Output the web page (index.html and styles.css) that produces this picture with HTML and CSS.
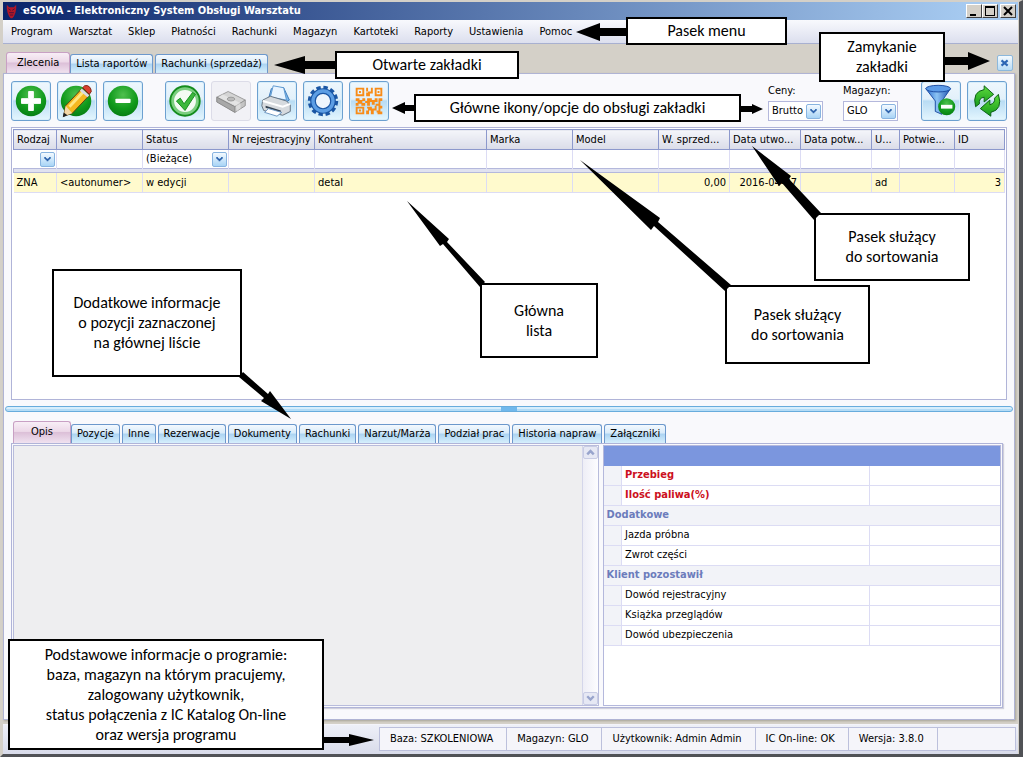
FILE: index.html
```html
<!DOCTYPE html>
<html lang="pl">
<head>
<meta charset="utf-8">
<title>eSOWA - Elektroniczny System Obsługi Warsztatu</title>
<link rel="stylesheet" href="styles.css">
</head>
<body>
<svg class="defs" aria-hidden="true">
  <defs>
    <radialGradient id="green" cx="50%" cy="30%" r="75%">
      <stop offset="0" stop-color="#4fc04f"/><stop offset=".6" stop-color="#109a1c"/><stop offset="1" stop-color="#067a12"/>
    </radialGradient>
    <linearGradient id="blue" x1="0" y1="0" x2="1" y2="0">
      <stop offset="0" stop-color="#2a6cd0"/><stop offset=".45" stop-color="#8cc4f4"/><stop offset="1" stop-color="#1c50b0"/>
    </linearGradient>
    <linearGradient id="leaf" x1="0" y1="0" x2="0" y2="1">
      <stop offset="0" stop-color="#5edb3c"/><stop offset="1" stop-color="#159a1c"/>
    </linearGradient>
    <symbol id="chevron" viewBox="0 0 16 16">
      <path d="M4 5h2v1h1v1h2V6h1V5h2v2h-1v1h-1v1H9v1H7V9H6V8H5V7H4z" fill="#2c62ac"/>
    </symbol>
  </defs>
</svg>
<div class="window">
  <header class="titlebar">
    <svg class="logo" viewBox="0 0 14 17" aria-hidden="true">
      <path d="M1 0l3 3h6l3-3v5l-1 5-2 5-2 2H6l-2-2-2-5-1-5z" fill="#b01828"/>
      <path d="M3 5l3 2M11 5L8 7M4 10h6M5 13h4" stroke="#3a1040" stroke-width="1" fill="none"/>
    </svg>
    <h1>eSOWA - Elektroniczny System Obsługi Warsztatu</h1>
    <div class="winbuttons">
      <button aria-label="Minimalizuj"><svg viewBox="0 0 14 12"><path d="M3 9h6v2H3z"/></svg></button>
      <button aria-label="Maksymalizuj"><svg viewBox="0 0 14 12"><path d="M2 1h10v10H2zM3 3v7h8V3z" fill-rule="evenodd"/></svg></button>
      <button aria-label="Zamknij"><svg viewBox="0 0 14 12"><path d="M3 2l8 8M11 2l-8 8" stroke="#000" stroke-width="2"/></svg></button>
    </div>
  </header>
  <nav class="menu">
    <button>Program</button><button>Warsztat</button><button>Sklep</button><button>Płatności</button><button>Rachunki</button><button>Magazyn</button><button>Kartoteki</button><button>Raporty</button><button>Ustawienia</button><button>Pomoc</button>
  </nav>
  <div class="tabstrip">
    <div class="tabs">
      <button class="tab active">Zlecenia</button><button class="tab">Lista raportów</button><button class="tab">Rachunki (sprzedaż)</button>
    </div>
    <button class="closetab" aria-label="Zamknij zakładkę"><svg viewBox="0 0 16 16"><path d="M4 5l7 6M11 5l-7 6" stroke="#2c66b4" stroke-width="2.4"/></svg></button>
  </div>
  <main class="page">
    <div class="toolbar">
      <button class="tool" aria-label="Dodaj"><svg viewBox="0 0 40 40"><circle cx="20" cy="20" r="16" fill="url(#green)"/><path d="M17.500 10h5v7.500H30v5h-7.500V30h-5v-7.500H10v-5h7.500z" fill="#fff" stroke="#fff" stroke-linejoin="round"/></svg></button>
      <button class="tool" aria-label="Edytuj"><svg viewBox="0 0 40 40"><circle cx="19" cy="20" r="16" fill="url(#green)"/><path d="M6 36l2-11L25 7l8 7-18 19z" fill="#f4b820" stroke="#5c3c10"/><path d="M12 26L27 10" stroke="#ffe680" stroke-width="3"/><path d="M6 36l2-11 7 8z" fill="#f4d8a8"/><path d="M5 37l1-5 4 3z" fill="#222"/><path d="M26 6l2-2q3-1 5 1t2 5l-2 3z" fill="#d84030" stroke="#802010"/><path d="M24 8l8 7" stroke="#d8dce0" stroke-width="3"/></svg></button>
      <button class="tool" aria-label="Usuń"><svg viewBox="0 0 40 40"><circle cx="20" cy="20" r="16" fill="url(#green)"/><rect x="12" y="17.500" width="16" height="4.500" rx="1" fill="#fff"/></svg></button>
      <button class="tool apart" aria-label="Zatwierdź"><svg viewBox="0 0 40 40"><circle cx="20" cy="20" r="15" fill="#fff" stroke="#148c1c" stroke-width="3"/><circle cx="20" cy="20" r="13" fill="#f4fbf4" stroke="#7ccf80" stroke-width="3"/><path d="M11 20l4-3 4 6 9-12 3 2-11 17z" fill="#3cb83c" stroke="#148c1c"/></svg></button>
      <button class="tool off" aria-label="Płatność" disabled><svg viewBox="0 0 40 40"><path d="M5 16l12-6 18 9-11 7z" fill="#d4d4d4" stroke="#9a9a9a"/><path d="M5 16l19 10v6L5 21z" fill="#a8a8a8" stroke="#888"/><path d="M24 26l11-7v6l-11 7z" fill="#c4c4c4" stroke="#929292"/><path d="M11 13l19 9v6l-4 3-1-6-18-9z" fill="#f4f4f4" opacity=".5"/><ellipse cx="20" cy="18" rx="4" ry="2" fill="#bbb" stroke="#999"/></svg></button>
      <button class="tool" aria-label="Drukuj"><svg viewBox="0 0 40 40"><path d="M11 18l3-11 13-1 6 13-9 5z" fill="#7db8ec" stroke="#3c78b8"/><path d="M13 16l3-12 11 2 3 13z" fill="#e8f4ff" stroke="#5c98d0"/><path d="M5 19l8-4 17 5 4 4v7l-8 4-20-5-2-5z" fill="#d6dade" stroke="#62717f"/><path d="M5 20l21 6 8-3" fill="none" stroke="#fff" stroke-width="2"/><path d="M8 25l16 5v2L8 27z" fill="#33414f"/><path d="M11 28l14 4-5 4-13-4z" fill="#fff" stroke="#6894c0"/></svg></button>
      <button class="tool" aria-label="Ustawienia"><svg viewBox="0 0 40 40"><circle cx="20" cy="20" r="14" fill="none" stroke="#1a56a4" stroke-width="4" stroke-dasharray="4.500 2.830"/><circle cx="20" cy="20" r="10.500" fill="#eef6fd" stroke="#1a56a4" stroke-width="6"/><circle cx="20" cy="20" r="10.500" fill="none" stroke="#5c9ee4" stroke-width="3.500"/></svg></button>
      <button class="tool" aria-label="Kod QR"><svg viewBox="0 0 40 40"><path fill="#f88c18" fill-rule="evenodd" d="M6 6h9v9H6zM8 8v5h5V8zM9.500 9.500h2v2h-2zM26 6h8v9h-8zM28 8v5h4V8zM29 9.500h2v2h-2zM6 26h9v8H6zM8 28v4h5v-4zM9.500 29h2v2h-2zM17 6h2v4h3V6h2v6h-3v3h-4v-4h2v-1h-2zM6 17h4v2h3v-2h3v3h-3v2h3v3h-4v-2h-3v2H6v-3h2v-2H6zM18 17h5v2h3v-2h3v4h-3v3h-3v-3h-2v4h-3v-3h-2v-2h2zM30 17h4v3h-2v5h2v3h-4v-3h-3v-2h3zM18 26h5v2h3v-3h2v5h-3v4h-3v-4h-2v4h-3v-4h2v-2h-1zM28 30h2v-2h2v3h2v3h-5v-2h-1z"/></svg></button>
      <div class="filters">
        <label class="field">Ceny:
          <span class="combo"><select><option>Brutto</option></select><svg><use href="#chevron"/></svg></span>
        </label>
        <label class="field">Magazyn:
          <span class="combo"><select><option>GLO</option></select><svg><use href="#chevron"/></svg></span>
        </label>
      </div>
      <button class="tool" aria-label="Usuń filtr"><svg viewBox="0 0 40 40"><path d="M4 7q14 6 26 0L21 20v14l-7-3V20z" fill="url(#blue)" stroke="#1c4ca0"/><ellipse cx="17" cy="7" rx="13" ry="3.500" fill="#5c9ce8" stroke="#1c4ca0"/><circle cx="26" cy="26" r="9" fill="url(#green)"/><rect x="20" y="24" width="12" height="4" fill="#fff"/></svg></button>
      <button class="tool" aria-label="Odśwież"><svg viewBox="0 0 40 40" fill="url(#leaf)" stroke="#0a5c14"><path d="M8 26Q4 10 17 8V4l10 9-10 8v-5q-6 1-5 7z"/><path d="M32 13q5 16-8 19v4l-11-8 10-9v5q6-2 5-7z"/></svg></button>
    </div>

    <section class="list">
      <table class="grid">
        <colgroup><col class="c43"><col class="c86"><col class="c86"><col class="c86"><col class="c172"><col class="c86"><col class="c86"><col class="c71"><col class="c71"><col class="c71"><col class="c28"><col class="c55"><col></colgroup>
        <thead>
          <tr><th>Rodzaj</th><th>Numer</th><th>Status</th><th>Nr rejestracyjny</th><th>Kontrahent</th><th>Marka</th><th>Model</th><th>W. sprzed...</th><th>Data utwo...</th><th>Data potw...</th><th>U...</th><th>Potwie...</th><th>ID</th></tr>
        </thead>
        <tbody>
          <tr class="filter">
            <td><span class="combo"><select aria-label="Filtr: Rodzaj"><option></option></select><svg><use href="#chevron"/></svg></span></td><td></td>
            <td><span class="combo"><select aria-label="Filtr: Status"><option>(Bieżące)</option></select><svg><use href="#chevron"/></svg></span></td><td></td><td></td><td></td><td></td><td></td><td></td><td></td><td></td><td></td><td></td>
          </tr>
          <tr class="rule"><td colspan="13"></td></tr>
          <tr class="row"><td>ZNA</td><td>&lt;autonumer&gt;</td><td>w edycji</td><td></td><td>detal</td><td></td><td></td><td class="num">0,00</td><td class="num">2016-04-27</td><td></td><td>ad</td><td></td><td class="num">3</td></tr>
        </tbody>
      </table>
    </section>

    <div class="splitter"><span></span></div>

    <div class="tabs lower">
      <button class="tab active">Opis</button><button class="tab">Pozycje</button><button class="tab">Inne</button><button class="tab">Rezerwacje</button><button class="tab">Dokumenty</button><button class="tab">Rachunki</button><button class="tab">Narzut/Marża</button><button class="tab">Podział prac</button><button class="tab">Historia napraw</button><button class="tab">Załączniki</button>
    </div>
    <section class="details">
      <div class="memo">
        <textarea aria-label="Opis" readonly></textarea>
        <div class="scroll">
          <button aria-label="W górę"><svg viewBox="0 0 16 13"><path d="M4 9l4-4 4 4" fill="none" stroke="#98a4cc" stroke-width="3"/></svg></button>
          <button aria-label="W dół"><svg viewBox="0 0 16 13"><path d="M4 4l4 4 4-4" fill="none" stroke="#98a4cc" stroke-width="3"/></svg></button>
        </div>
      </div>
      <div class="props">
        <table>
          <colgroup><col class="gut"><col class="name"><col></colgroup>
          <tbody>
            <tr class="sel"><td colspan="3"></td></tr>
            <tr class="must"><td></td><th>Przebieg</th><td></td></tr>
            <tr class="must"><td></td><th>Ilość paliwa(%)</th><td></td></tr>
            <tr class="group"><th colspan="3">Dodatkowe</th></tr>
            <tr><td></td><th>Jazda próbna</th><td></td></tr>
            <tr><td></td><th>Zwrot części</th><td></td></tr>
            <tr class="group"><th colspan="3">Klient pozostawił</th></tr>
            <tr><td></td><th>Dowód rejestracyjny</th><td></td></tr>
            <tr><td></td><th>Książka przeglądów</th><td></td></tr>
            <tr><td></td><th>Dowód ubezpieczenia</th><td></td></tr>
          </tbody>
        </table>
      </div>
    </section>
  </main>
  <footer class="status">
    <span>Baza: SZKOLENIOWA</span><span>Magazyn: GLO</span><span>Użytkownik: Admin Admin</span><span>IC On-line: OK</span><span>Wersja: 3.8.0</span><span class="rest"></span>
  </footer>
</div>

<p class="note menu-note">Pasek menu</p>
<p class="note tabs-note">Otwarte zakładki</p>
<p class="note close-note">Zamykanie<br>zakładki</p>
<p class="note tools-note">Główne ikony/opcje do obsługi zakładki</p>
<p class="note sort-note-a">Pasek służący<br>do sortowania</p>
<p class="note sort-note-b">Pasek służący<br>do sortowania</p>
<p class="note list-note">Główna<br>lista</p>
<p class="note details-note">Dodatkowe informacje<br>o pozycji zaznaczonej<br>na głównej liście</p>
<p class="note status-note">Podstawowe informacje o programie:<br>baza, magazyn na którym pracujemy,<br>zalogowany użytkownik,<br>status połączenia z IC Katalog On-line<br>oraz wersja programu</p>
<svg class="arrows" width="1023" height="757" aria-hidden="true">
  <path d="M576 32l24-9v5h27v8h-27v5z"/>
  <path d="M274 65l31-9v5h31v8h-31v5z"/>
  <path d="M990 61l-22-9v5h-24v8h24v5z"/>
  <path d="M392 108l13-6v3h10v6h-10v3z"/>
  <path d="M763 109l-11-5v2h-12v6h12v2z"/>
  <path d="M752 146L791 176L789 179L821 213L814 220L782 183L779 186z"/>
  <path d="M580 160L660 218L658 222L731 285L725 291L654 226L651 230z"/>
  <path d="M407 201L449 239L447 242L485 282L480 287L443 244L440 246z"/>
  <path d="M291 419L261 401L264 398L239 377L243 372L268 394L270 391z"/>
  <path d="M374 740l-25-6v3h-26v6h26v3z"/>
</svg>
</body>
</html>
```
FILE: styles.css
```css
* { box-sizing: border-box; }
body {
  margin: 0;
  font: 11px/14px Tahoma, "DejaVu Sans Condensed", "DejaVu Sans", sans-serif;
  color: #000;
  position: relative;
}
button, select, textarea { font: inherit; color: inherit; margin: 0; padding: 0; border: 0; background: none; }
svg { display: block; }
.defs { position: absolute; width: 0; height: 0; }

.window {
  display: flex;
  flex-direction: column;
  min-height: 100vh;
  background: #d4d0c8;
  border: solid #d4d0c8;
  border-width: 2px 4px 3px 3px;
  border-right-color: #505256;
  border-bottom-color: #505256;
}

.titlebar {
  display: flex;
  align-items: center;
  gap: 6px;
  height: 18px;
  margin-right: 1px;
  padding: 0 2px 0 3px;
  background: linear-gradient(90deg, #0a246a, #a6caf0 95%);
}
.logo { width: 11px; height: 17px; }
.titlebar h1 { margin: 0; font-size: 11px; font-weight: bold; color: #fff; flex: 1; }
.winbuttons { display: flex; }
.winbuttons button {
  width: 16px;
  height: 14px;
  background: #d4d0c8;
  border: 1px solid;
  border-color: #fff #404040 #404040 #fff;
}
.winbuttons button:last-child { margin-left: 2px; }

.menu {
  display: flex;
  gap: 16px;
  height: 24px;
  padding: 0 8px;
  background: linear-gradient(#f8f9fd, #dcdfee);
  border-bottom: 1px solid #a8b0d0;
  margin-right: 1px;
}

.tabstrip { display: flex; justify-content: space-between; height: 29px; padding: 0 6px 0 3px; }
.tabs { display: flex; align-items: flex-end; gap: 2px; }
.tab {
  height: 19px;
  padding: 0 5px;
  border: 1px solid #6c98cc;
  border-bottom: 0;
  border-radius: 3px 3px 0 0;
  background: linear-gradient(#f4f9fe, #d8ebfa 45%, #abd3f2 50%, #d6effc);
}
.tab.active {
  height: 21px;
  padding: 0 10px;
  margin-right: -2px;
  border-color: #c8a0c4;
  background: linear-gradient(#f8eef6, #ecd8e8 45%, #dcc0d8 50%, #f0e2f0);
}
.closetab {
  align-self: center;
  width: 16px;
  height: 16px;
  border: 1px solid #8cb8dc;
  border-radius: 2px;
  background: linear-gradient(#f4faff, #b8dcf6);
  margin-top: 8px;
}

.page {
  flex: 1;
  display: flex;
  flex-direction: column;
  margin-right: 4px;
  padding: 7px 1px 11px;
  border: 1px solid #b0b4d4;
  background: #f9f9fc;
  box-shadow: 1px 1px 2px #a8a498;
}
.toolbar { display: flex; gap: 6px; margin: 0 6px; }
.tool {
  width: 40px;
  height: 40px;
  border: 1px solid #6ca0d0;
  border-radius: 3px;
  background: linear-gradient(#eef7fd, #e2f0fa 45%, #b8dcf4 50%, #e4f6fe);
  box-shadow: inset 0 0 0 1px #d8eefa;
}
.tool svg { width: 38px; height: 38px; }
.tool.apart { margin-left: 16px; }
.tool.off { border-color: #dcdce8; background: #f1f1f6; box-shadow: none; }
.filters { display: flex; gap: 20px; margin: 3px 17px 0 auto; }
.field { width: 55px; white-space: nowrap; }
.field .combo { height: 20px; margin-top: 3px; border: 1px solid #b4b8dc; background: #fff; }
.combo { display: flex; align-items: center; position: relative; }
.combo select { appearance: none; width: 100%; padding: 0 18px 0 3px; background: none; }
.combo svg {
  position: absolute;
  right: 1px;
  width: 15px;
  height: 15px;
  border: 1px solid #88b4e0;
  border-radius: 2px;
  background: linear-gradient(#f4faff, #a8d4f6);
  pointer-events: none;
}

.list {
  flex: 273 1 0;
  margin: 6px 6px 0;
  padding: 1px;
  border: 1px solid #b0b4d8;
  background: #fff;
}
.grid { width: 100%; border-collapse: collapse; table-layout: fixed; }
.grid th, .grid td { padding: 0 3px; white-space: nowrap; }
.grid th {
  height: 20px;
  text-align: left;
  font-weight: normal;
  border: 1px solid #8c98cc;
  background: linear-gradient(#f4f5fa, #dadce8);
}
.grid td { border: 0 solid #dcdcf4; border-right-width: 1px; }
.filter td { height: 19px; padding: 0; }
.grid .rule td { height: 4px; padding: 0; background: #e0e2f0; border: 1px solid #b4b8dc; }
.row td { height: 20px; background: #fffacd; border-bottom-width: 1px; }
.grid .num { text-align: right; }
.c28 { width: 28px; } .c43 { width: 43px; } .c55 { width: 55px; } .c71 { width: 71px; } .c86 { width: 86px; } .c172 { width: 172px; }

.splitter {
  height: 6px;
  margin: 6px 0 9px;
  border: 1px solid #68acdc;
  border-radius: 3px;
  background: linear-gradient(#d8eefc 50%, #b4dcf6 50%);
}
.splitter span { display: block; width: 16px; height: 4px; margin: 0 auto; background: #70b8ec; }

.lower { margin-left: 8px; }
.lower .tab.active { height: 22px; padding: 0 17px; }

.details {
  flex: 265 1 0;
  display: grid;
  grid-template-columns: 585fr 398fr;
  gap: 4px;
  margin: 0 10px 0 6px;
  padding: 1px;
  border: 1px solid #b0b4d8;
  box-shadow: 1px 1px 1px #d0d0dc;
}
.memo { display: flex; border: 1px solid #b8bcdc; background: #eeeef0; }
.memo textarea { flex: 1; resize: none; outline: 0; }
.scroll {
  width: 16px;
  display: flex;
  flex-direction: column;
  justify-content: space-between;
  background: linear-gradient(90deg, #eeeef6, #fdfdff);
  border-left: 1px solid #d4d6ea;
}
.scroll button { height: 13px; border: 1px solid #c8cce4; border-radius: 2px; background: #e6e8f4; }
.props { border: 1px solid #b4b8dc; background: #fff; }
.props table { width: 100%; border-collapse: collapse; table-layout: fixed; }
.props td, .props th { height: 20px; padding: 0 3px; border: 1px solid #dcdcf4; text-align: left; font-weight: normal; }
.props td:first-child, .props .group th { background: #f2f3f8; border-left: 0; }
.props td:last-child { border-right: 0; }
.props .group th { color: #6c7cbc; font-weight: bold; border-right: 0; }
.props .must th { color: #cc1020; font-weight: bold; }
.props .sel td { height: 19px; background: #7b96de; border-color: #7b96de; }
.gut { width: 18px; }
.name { width: 248px; }

.status {
  display: flex;
  height: 30px;
  margin: 4px 1px 0 0;
  padding: 2px 2px 3px 376px;
  border-top: 1px solid #f4f4fa;
  background: linear-gradient(#eef0f8, #d8dbea);
}
.status span { display: flex; align-items: center; padding: 0 13px 0 10px; border: 1px solid #bcc0dc; background: #f5f5fa; margin-right: -1px; }
.status .rest { flex: 1; margin: 0; }

.arrows { position: absolute; top: 0; left: 0; pointer-events: none; }
.note {
  position: absolute;
  display: grid;
  place-content: center;
  margin: 0;
  border: 2px solid #000;
  background: #fff;
  font: 16px/20px Carlito, Lato, sans-serif;
  text-align: center;
  white-space: nowrap;
}
.menu-note { left: 626px; top: 17px; width: 161px; height: 28px; }
.tabs-note { left: 335px; top: 51px; width: 184px; height: 28px; }
.close-note { left: 819px; top: 32px; width: 126px; height: 50px; }
.tools-note { left: 414px; top: 94px; width: 327px; height: 28px; }
.sort-note-a { left: 814px; top: 213px; width: 156px; height: 68px; }
.sort-note-b { left: 725px; top: 285px; width: 145px; height: 79px; }
.list-note { left: 480px; top: 283px; width: 118px; height: 75px; }
.details-note { left: 52px; top: 269px; width: 190px; height: 108px; }
.status-note { left: 8px; top: 639px; width: 316px; height: 111px; }
```
